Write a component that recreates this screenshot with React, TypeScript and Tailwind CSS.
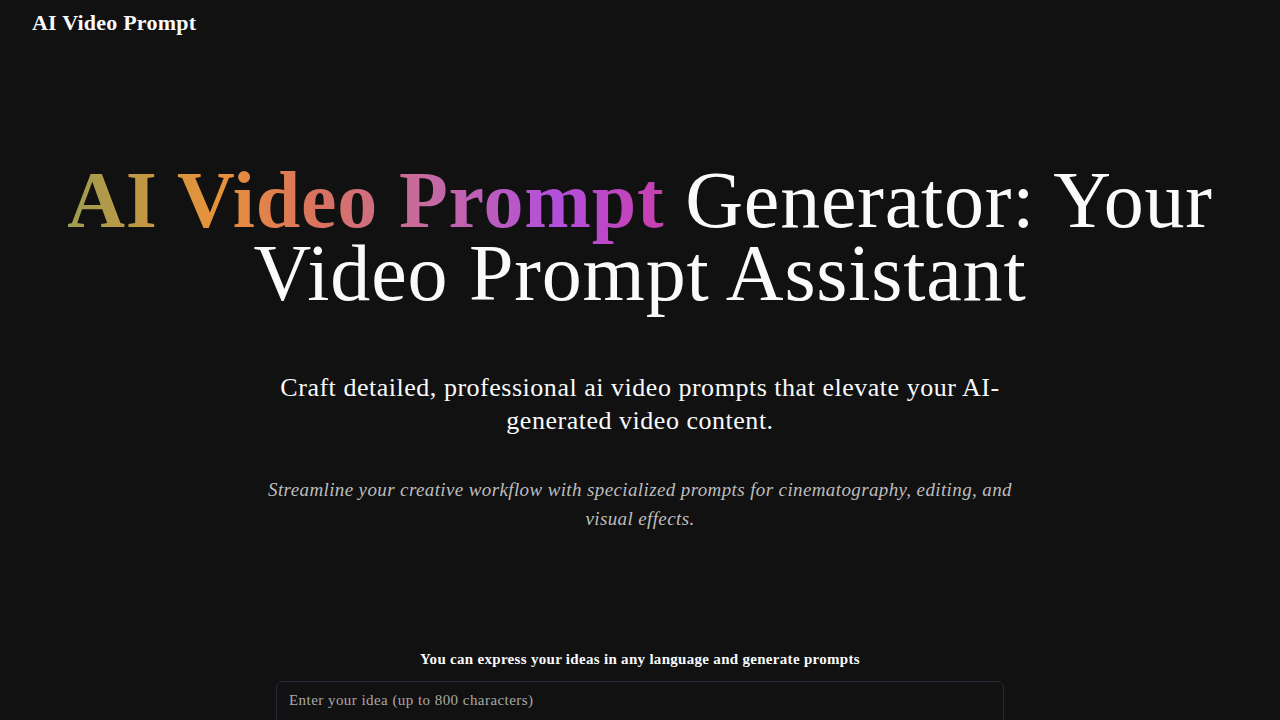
export default function App() {
  return (
    <div className="min-h-screen bg-[#111111] text-slate-50 font-['Liberation_Serif',serif]">
      <header className="flex h-11 items-center px-8">
        <span className="text-[22px] font-bold tracking-[0.01em]">AI Video Prompt</span>
      </header>

      <main className="mx-auto flex max-w-6xl flex-col items-center pt-[120px] text-center">
        <h1 className="text-[80px] leading-[73px] font-normal tracking-[0.01em]">
          <span className="bg-[linear-gradient(90deg,#9c9d4f_0%,#e8923a_25%,#d9725f_42%,#c66aa0_60%,#b24fdb_82%,#c83fae_100%)] bg-clip-text font-bold text-transparent">
            AI Video Prompt
          </span>{' '}
          Generator: Your Video Prompt Assistant
        </h1>

        <p className="mt-[61px] max-w-3xl text-[26px] leading-[33px] tracking-[0.02em]">
          Craft detailed, professional ai video prompts that elevate your AI-generated video content.
        </p>

        <p className="mt-[38px] max-w-3xl text-[19px] leading-[29px] tracking-[0.02em] text-[#bdbdbd] italic">
          Streamline your creative workflow with specialized prompts for cinematography, editing, and visual effects.
        </p>

        <section className="mt-[115px] flex w-full max-w-3xl flex-col items-center px-5">
          <p className="text-[15px] font-bold tracking-[0.02em]">You can express your ideas in any language and generate prompts</p>
          <div className="mt-2.5 h-32 w-full rounded-md border border-[#222a38] px-3 pt-1.5 text-left">
            <span className="text-[15px] tracking-[0.03em] text-[#a8a8a8]">Enter your idea (up to 800 characters)</span>
          </div>
        </section>
      </main>
    </div>
  );
}
